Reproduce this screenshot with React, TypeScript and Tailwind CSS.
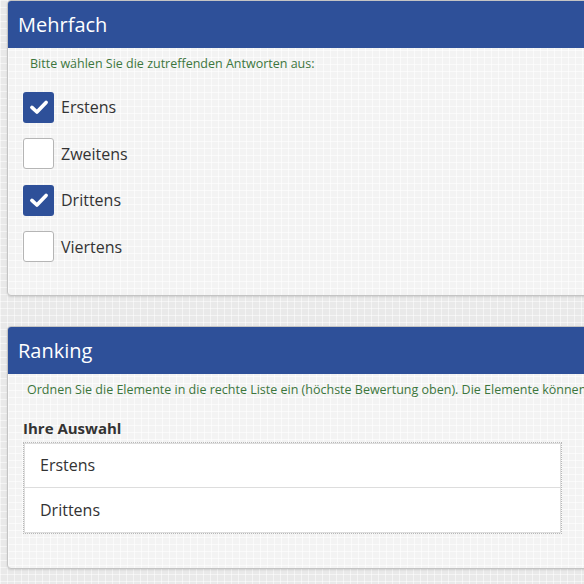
const options = [
  { label: "Erstens", checked: true },
  { label: "Zweitens", checked: false },
  { label: "Drittens", checked: true },
  { label: "Viertens", checked: false },
]

const ranked = ["Erstens", "Drittens"]

function CheckBox({ checked }: { checked: boolean }) {
  return checked ? (
    <span className="flex h-[31px] w-[31px] items-center justify-center rounded-[3px] bg-[#2e5099]">
      <svg viewBox="0 0 24 24" className="h-[20px] w-[20px]">
        <path d="M3.5 12.5 L9.5 18 L20.5 6.5" fill="none" stroke="#fff" strokeWidth="4.4" strokeLinecap="round" strokeLinejoin="round" />
      </svg>
    </span>
  ) : (
    <span className="block h-[31px] w-[31px] rounded-[3px] border border-[#b5b5b5] bg-white" />
  )
}

function Panel({ title, children }: { title: string; children: React.ReactNode }) {
  return (
    <div className="w-[620px] overflow-hidden rounded-[4px] border border-[#c4c4c4] bg-[#f3f3f3] bg-[linear-gradient(rgba(255,255,255,0.55)_1px,transparent_1px),linear-gradient(90deg,rgba(255,255,255,0.55)_1px,transparent_1px)] bg-[size:7px_7px] shadow-[0_1px_2px_rgba(0,0,0,0.12)]">
      <div className="flex h-[47px] items-center bg-[#2e5099] px-[10px]">
        <h2 className="text-[20px] text-white">{title}</h2>
      </div>
      {children}
    </div>
  )
}

export default function App() {
  return (
    <div
      className="h-[584px] w-[584px] overflow-hidden bg-[#e9e9e9] bg-[linear-gradient(rgba(255,255,255,0.5)_1px,transparent_1px),linear-gradient(90deg,rgba(255,255,255,0.5)_1px,transparent_1px)] bg-[size:7px_7px] pl-[7px]"
      style={{ fontFamily: "'Open Sans', sans-serif" }}
    >
      <Panel title="Mehrfach">
        <div className="px-[15px] pb-[33px] pt-[7px]">
          <p className="pl-[7px] text-[12.5px] text-[#3c763d]">Bitte wählen Sie die zutreffenden Antworten aus:</p>
          <div className="mt-[18px] flex flex-col gap-[15.5px]">
            {options.map((o) => (
              <label key={o.label} className="flex items-center gap-[7px]">
                <CheckBox checked={o.checked} />
                <span className="text-[16px] text-[#333]">{o.label}</span>
              </label>
            ))}
          </div>
        </div>
      </Panel>

      <div className="h-[30px]" />

      <Panel title="Ranking">
        <div className="px-[15px] pb-[34px] pt-[7px]">
          <p className="whitespace-nowrap pl-[4px] text-[12.5px] text-[#3c763d]">
            Ordnen Sie die Elemente in die rechte Liste ein (höchste Bewertung oben). Die Elemente können per Drag &amp; Drop verschoben werden.
          </p>
          <h3 className="mt-[17px] text-[15px] font-bold text-[#333]">Ihre Auswahl</h3>
          <div className="mt-[2px] w-[539px] border border-dotted border-[#b8b8b8]">
            {ranked.map((r, i) => (
              <div
                key={r}
                className={`flex h-[45px] items-center border-x border-[#ddd] bg-white px-[15px] text-[16px] text-[#333] ${i === 0 ? "border-y" : "border-b"}`}
              >
                {r}
              </div>
            ))}
          </div>
        </div>
      </Panel>
    </div>
  )
}
